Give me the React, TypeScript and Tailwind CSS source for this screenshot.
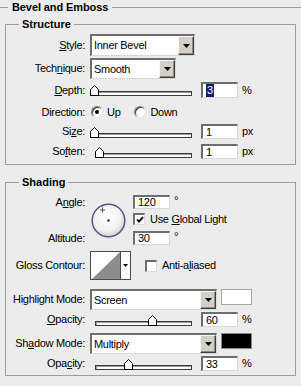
import React from 'react';

const sunken =
  'border-l-2 border-t-2 border-r border-b border-t-[#6e6e6e] border-l-[#6e6e6e] border-r-[#d8d8d8] border-b-[#d8d8d8] bg-white';

function Label({ children }: { children: React.ReactNode }) {
  return <div className="w-[79px] shrink-0 text-right">{children}</div>;
}

function Row({
  label,
  className,
  children,
}: {
  label: React.ReactNode;
  className: string;
  children: React.ReactNode;
}) {
  return (
    <div className={`flex items-center ${className}`}>
      <Label>{label}</Label>
      <div className="ml-[5px] flex items-center">{children}</div>
    </div>
  );
}

function Arrow() {
  return (
    <svg width="7" height="4" viewBox="0 0 7 4">
      <path d="M0 0H7L3.5 4Z" fill="#000" />
    </svg>
  );
}

function Combo({ value, className }: { value: string; className: string }) {
  return (
    <div className={`flex ${sunken} ${className}`}>
      <span className="flex flex-1 items-center pl-[2px]">{value}</span>
      <span className="flex w-[16px] items-center justify-center border border-t-[#f6f6f6] border-l-[#f6f6f6] border-r-[#404040] border-b-[#404040] bg-[#d4d0c8] shadow-[inset_-1px_-1px_0_#8a8a8a]">
        <Arrow />
      </span>
    </div>
  );
}

function NumField({ children, className = 'h-[15px]' }: { children: React.ReactNode; className?: string }) {
  return (
    <div className={`flex w-[37px] items-center pl-[3px] ${sunken} ${className}`}>{children}</div>
  );
}

function Slider({ value, className }: { value: number; className: string }) {
  return (
    <div className={`relative flex h-[12px] items-end ${className}`}>
      <div className="h-[5px] w-full border border-[#3a3a3a] bg-white shadow-[inset_1px_1px_0_#9a9a9a]" />
      <svg
        className="absolute bottom-0"
        style={{ left: `calc(${value}% - ${value * 0.09}px)` }}
        width="9"
        height="11"
        viewBox="0 0 9 11"
      >
        <path d="M4.5 0.5L8.5 4.5V10.5H0.5V4.5Z" fill="#fff" stroke="#000" />
      </svg>
    </div>
  );
}

function Radio({ checked }: { checked?: boolean }) {
  return (
    <span className="flex h-[12px] w-[12px] items-center justify-center rounded-full border border-t-[#7a7a7a] border-l-[#7a7a7a] border-r-[#e4e4e4] border-b-[#e4e4e4] bg-white shadow-[inset_1px_1px_0_#3c3c3c]">
      {checked && <span className="h-[4px] w-[4px] rounded-full bg-black" />}
    </span>
  );
}

function Check({ checked }: { checked?: boolean }) {
  return (
    <span className={`flex h-[12px] w-[12px] items-center justify-center ${sunken}`}>
      {checked && (
        <svg width="8" height="8" viewBox="0 0 8 8">
          <path d="M1 3.5L3 5.7L7 1.2" fill="none" stroke="#000" strokeWidth="1.8" />
        </svg>
      )}
    </span>
  );
}

function AngleWheel() {
  return (
    <svg width="35" height="35" viewBox="0 0 35 35">
      <defs>
        <radialGradient id="wheel" cx="45%" cy="40%" r="60%">
          <stop offset="0%" stopColor="#ffffff" />
          <stop offset="70%" stopColor="#f1f1f1" />
          <stop offset="100%" stopColor="#cfcfd4" />
        </radialGradient>
      </defs>
      <circle cx="17.5" cy="17.5" r="16.3" fill="url(#wheel)" stroke="#4e5b86" strokeWidth="1.5" />
      <path d="M11.5 4.5V9.5M9 7H14" stroke="#555" strokeWidth="1" />
      <rect x="16.5" y="16.5" width="2" height="2" fill="#000" />
    </svg>
  );
}

function Contour() {
  return (
    <div className="flex h-[29px] w-[41px] border border-[#4a4a4a] bg-white">
      <svg width="29" height="27" viewBox="0 0 29 27">
        <path d="M1 27L29 0V27Z" fill="#8c8c8c" />
      </svg>
      <div className="flex flex-1 items-center justify-center border-l border-[#4a4a4a]">
        <svg width="5" height="3" viewBox="0 0 5 3">
          <path d="M0 0H5L2.5 3Z" fill="#000" />
        </svg>
      </div>
    </div>
  );
}

function Group({ title, className, children }: { title: string; className: string; children: React.ReactNode }) {
  return (
    <fieldset className={`mx-[5px] border border-[#9d9d9d] ${className}`}>
      <legend className="ml-[13px] px-[3px] font-bold tracking-normal">{title}</legend>
      {children}
    </fieldset>
  );
}

export default function App() {
  return (
    <div className="h-[386px] w-[301px] overflow-hidden bg-[#ececec] font-['Liberation_Sans',Arial,sans-serif] text-[11px] leading-[13px] tracking-[-0.3px] text-black">
      <div className="flex h-[15px] items-center">
        <div className="h-px w-[8px] bg-[#9d9d9d]" />
        <span className="px-[4px] font-bold tracking-[-0.1px]">Bevel and Emboss</span>
        <div className="h-px flex-1 bg-[#9d9d9d]" />
      </div>

      <Group title="Structure" className="mt-[3px] pb-[5px]">
        <Row label={<><u>S</u>tyle:</>} className="mt-[3px] h-[22px]">
          <Combo value="Inner Bevel" className="h-[22px] w-[105px]" />
        </Row>
        <Row label={<>Tech<u>n</u>ique:</>} className="mt-[2px] h-[21px]">
          <Combo value="Smooth" className="h-[21px] w-[86px]" />
        </Row>
        <Row label={<><u>D</u>epth:</>} className="mt-[3px] h-[16px]">
          <Slider value={0} className="w-[102px]" />
          <NumField className="ml-[9px] h-[16px]">
            <span className="bg-[#0a246a] px-[1px] text-white">3</span>
          </NumField>
          <span className="ml-[4px]">%</span>
        </Row>
        <Row label="Direction:" className="mt-[8px] h-[12px]">
          <span className="ml-px" />
          <Radio checked />
          <span className="ml-[4px]">Up</span>
          <span className="ml-[14px]" />
          <Radio />
          <span className="ml-[4px]">Down</span>
        </Row>
        <Row label={<>Si<u>z</u>e:</>} className="mt-[6px] h-[15px]">
          <Slider value={0} className="w-[102px]" />
          <NumField className="ml-[9px] h-[15px]">1</NumField>
          <span className="ml-[4px]">px</span>
        </Row>
        <Row label={<>So<u>f</u>ten:</>} className="mt-[5px] h-[15px]">
          <Slider value={0} className="ml-[5px] w-[97px]" />
          <NumField className="ml-[9px] h-[15px]">1</NumField>
          <span className="ml-[4px]">px</span>
        </Row>
      </Group>

      <Group title="Shading" className="mt-[11px] pb-[4px]">
        <div className="mt-[6px] flex h-[50px]">
          <div className="flex w-[79px] shrink-0 flex-col justify-between text-right">
            <div className="leading-[14px]">
              A<u>n</u>gle:
            </div>
            <div className="leading-[14px]">Altitude:</div>
          </div>
          <div className="ml-[6px] flex items-center">
            <AngleWheel />
          </div>
          <div className="ml-[7px] flex flex-col">
            <div className="flex h-[14px] items-start">
              <NumField className="h-[14px]">120</NumField>
              <span className="ml-[4px] leading-[10px]">°</span>
            </div>
            <div className="mt-[4px] flex h-[12px] items-center">
              <Check checked />
              <span className="ml-[5px]">
                Use <u>G</u>lobal Light
              </span>
            </div>
            <div className="mt-[6px] flex h-[14px] items-start">
              <NumField className="h-[14px]">30</NumField>
              <span className="ml-[4px] leading-[10px]">°</span>
            </div>
          </div>
        </div>
        <Row label="Gloss Contour:" className="mt-[6px] h-[29px]">
          <Contour />
          <span className="ml-[14px]" />
          <Check />
          <span className="ml-[5px]">
            Anti-a<u>l</u>iased
          </span>
        </Row>
        <Row label={<>Hi<u>g</u>hlight Mode:</>} className="mt-[9px] h-[21px]">
          <Combo value="Screen" className="h-[21px] w-[127px]" />
          <div className="ml-[4px] h-[16px] w-[31px] self-start border border-[#a6a6a6] bg-white" />
        </Row>
        <Row label={<><u>O</u>pacity:</>} className="mt-[2px] h-[15px]">
          <Slider value={60} className="ml-[5px] w-[97px]" />
          <NumField className="ml-[9px] h-[15px]">60</NumField>
          <span className="ml-[4px]">%</span>
        </Row>
        <Row label={<>Sh<u>a</u>dow Mode:</>} className="mt-[6px] h-[21px]">
          <Combo value="Multiply" className="h-[21px] w-[127px]" />
          <div className="ml-[4px] h-[16px] w-[31px] self-start border border-[#8a8a8a] bg-black" />
        </Row>
        <Row label={<>Opa<u>c</u>ity:</>} className="mt-[2px] h-[15px]">
          <Slider value={33} className="ml-[5px] w-[97px]" />
          <NumField className="ml-[9px] h-[15px]">33</NumField>
          <span className="ml-[4px]">%</span>
        </Row>
      </Group>
    </div>
  );
}
